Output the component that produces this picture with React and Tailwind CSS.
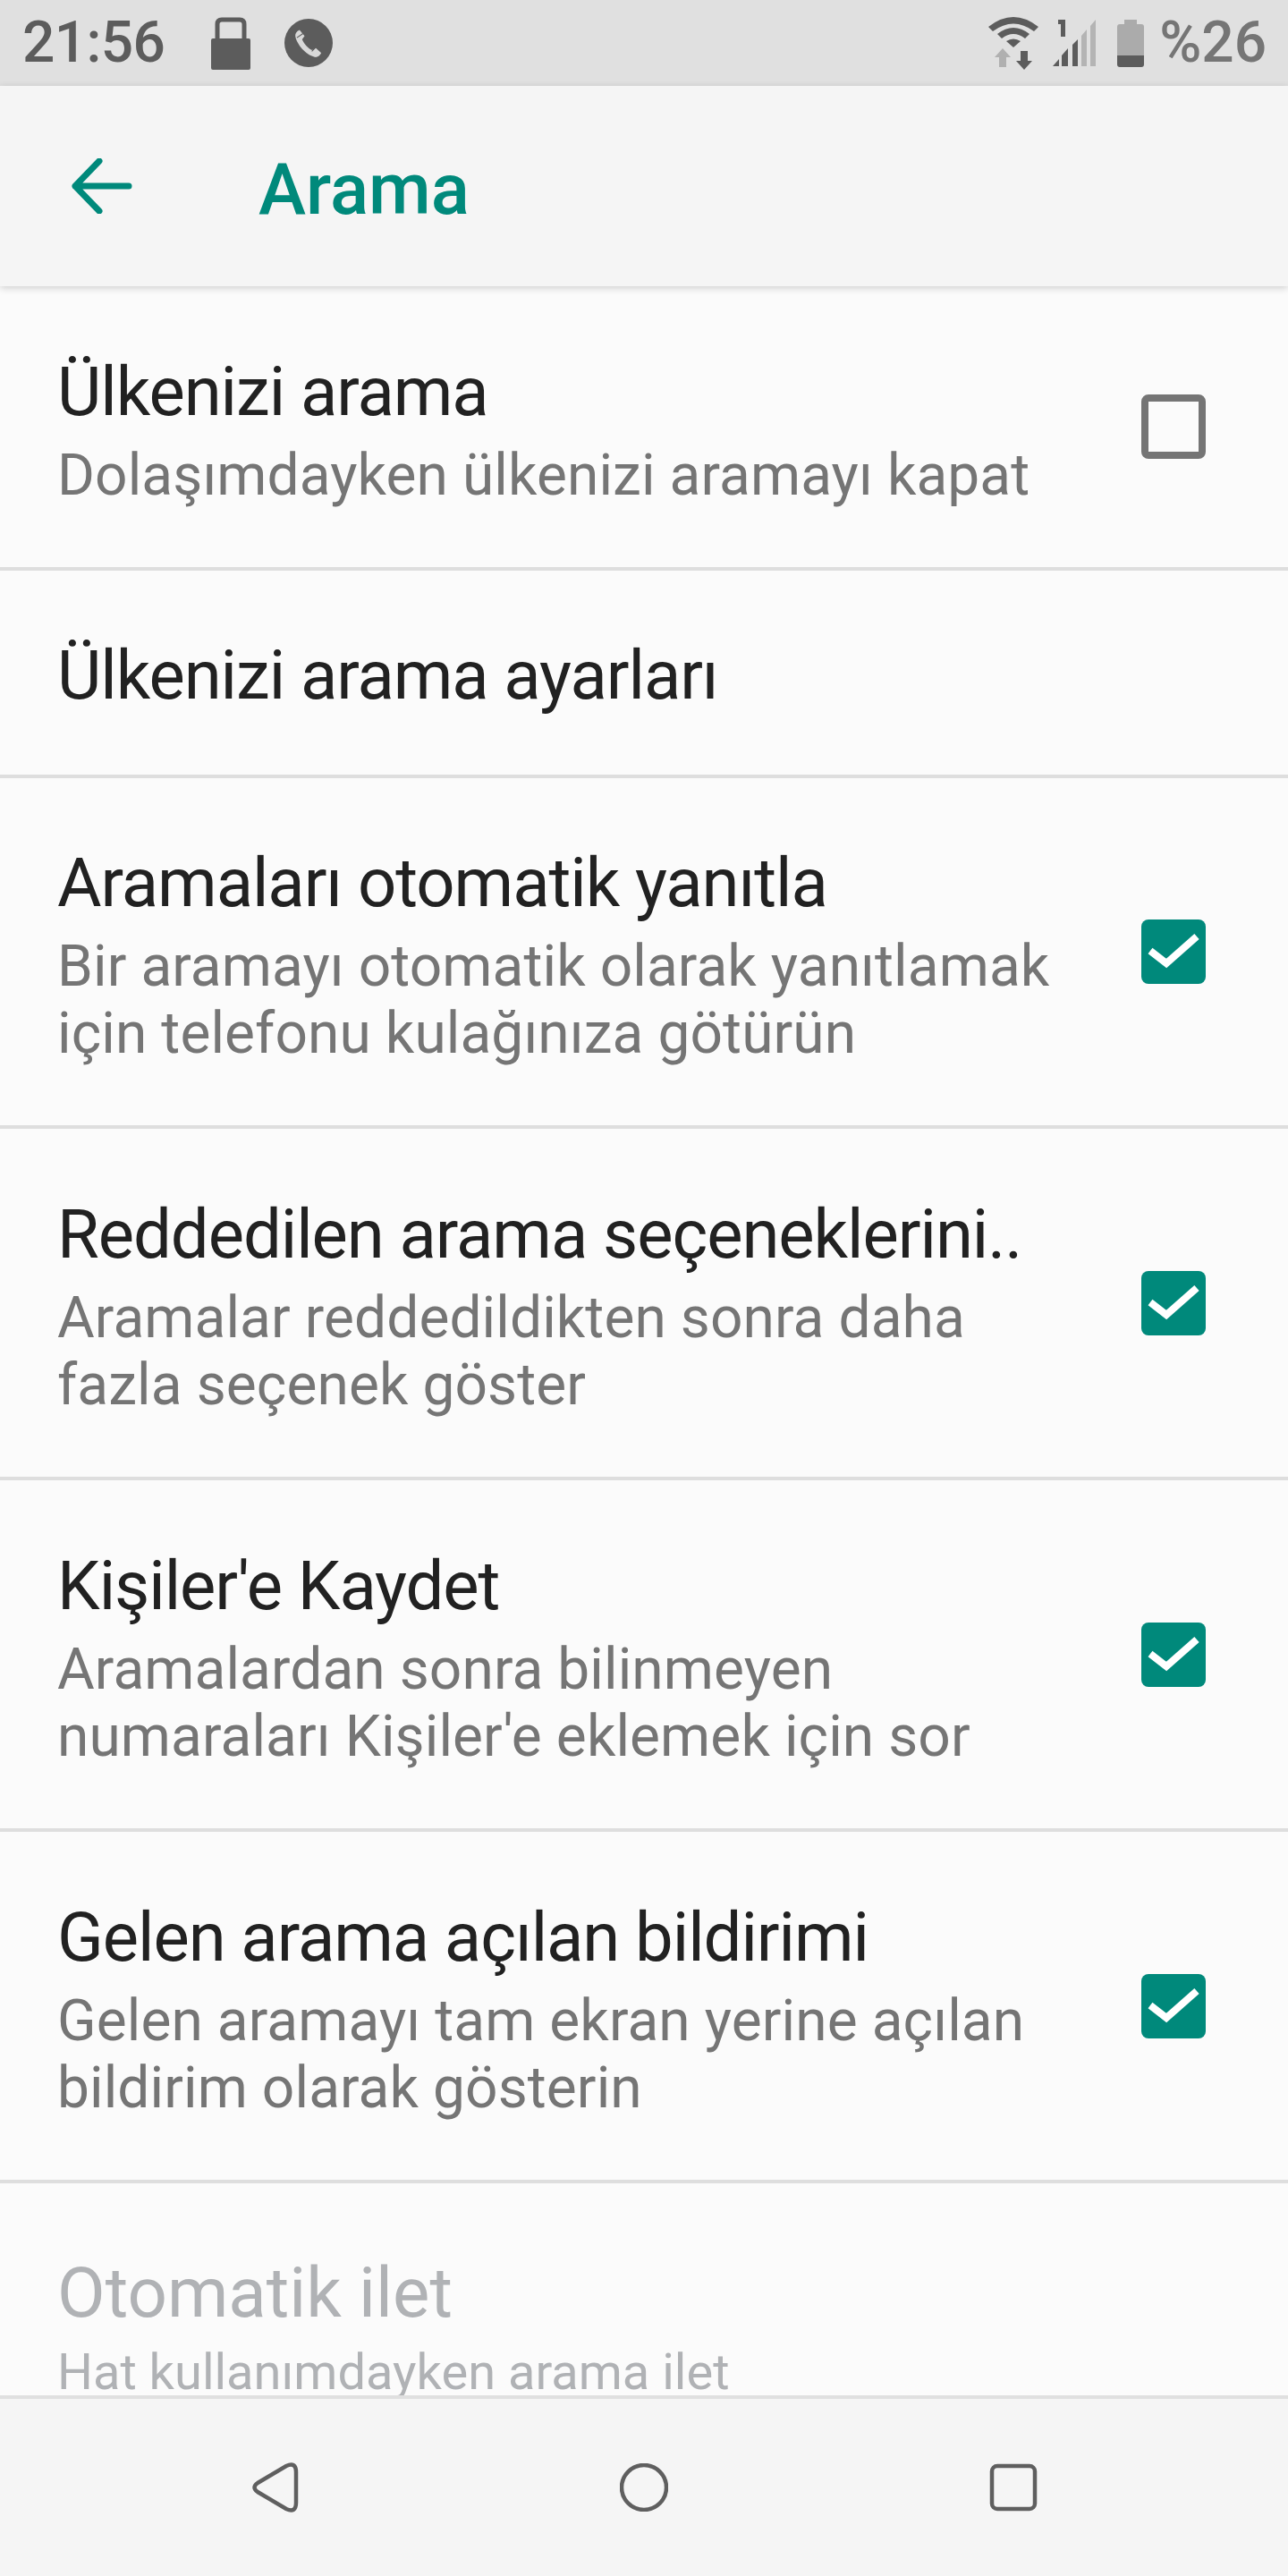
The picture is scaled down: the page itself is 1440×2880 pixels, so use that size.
const TEAL = "#00897b";

const rows = [
  { title: "Ülkenizi arama", lines: ["Dolaşımdayken ülkenizi aramayı kapat"], check: "off", h: "h-[318px]", pad: "pb-[4px]" },
  { title: "Ülkenizi arama ayarları", lines: [], h: "h-[232px]", pad: "pt-[6px]" },
  { title: "Aramaları otomatik yanıtla", lines: ["Bir aramayı otomatik olarak yanıtlamak", "için telefonu kulağınıza götürün"], check: "on", h: "h-[392px]", pad: "pb-[4px]" },
  { title: "Reddedilen arama seçeneklerini..", lines: ["Aramalar reddedildikten sonra daha", "fazla seçenek göster"], check: "on", h: "h-[393px]", pad: "pb-[4px]" },
  { title: "Kişiler'e Kaydet", lines: ["Aramalardan sonra bilinmeyen", "numaraları Kişiler'e eklemek için sor"], check: "on", h: "h-[393px]", pad: "pb-[4px]" },
  { title: "Gelen arama açılan bildirimi", lines: ["Gelen aramayı tam ekran yerine açılan", "bildirim olarak gösterin"], check: "on", h: "h-[393px]", pad: "pb-[4px]" },
];

const Checkbox = ({ checked }) =>
  checked ? (
    <svg width="72" height="72" viewBox="0 0 72 72" className="shrink-0">
      <rect width="72" height="72" rx="8" fill={TEAL} />
      <path d="M10 35 L28 49 L62 19" fill="none" stroke="#fff" strokeWidth="8" />
    </svg>
  ) : (
    <div className="w-[72px] h-[72px] shrink-0 rounded-lg border-[8px] border-[#757575]" />
  );

const Row = ({ row }) => (
  <div className={`${row.h} shrink-0 flex items-center pl-[64px] pr-[92px] border-b-4 border-[#dedede]`}>
    <div className={`${row.pad} flex-1 min-w-0`}>
      <div className="text-[76px] tracking-[-1.05px] leading-[112px] text-[#212121] whitespace-nowrap">{row.title}</div>
      {row.lines.map((line) => (
        <div key={line} className="text-[64px] tracking-[0.1px] leading-[75px] text-[#757575] whitespace-nowrap">{line}</div>
      ))}
    </div>
    {row.check && <Checkbox checked={row.check === "on"} />}
  </div>
);

const StatusRight = () => (
  <svg width="125" height="60" viewBox="1105 18 125 60" fill="none">
    <path d="M1105 30 Q1133 8 1161 30 L1156 35 Q1133 18 1110 35 Z" fill="#5c5c5c" />
    <path d="M1115 38 Q1133 24 1151 38 L1146 43 Q1133 33 1120 43 Z" fill="#5c5c5c" />
    <path d="M1125 46 Q1133 41 1141 46 L1133 53 Z" fill="#5c5c5c" />
    <path d="M1121 54 L1130 64 H1125 V75 H1117 V64 H1112 Z" fill="#b0b0b0" />
    <path d="M1141 57 H1149 V68 H1154 L1145 78 L1136 68 H1141 Z" fill="#5c5c5c" />
    <path d="M1183 22 H1191 V41 H1186 V27 H1183 Z" fill="#5c5c5c" />
    <path d="M1177 74 L1184 66 V74 Z" fill="#5c5c5c" />
    <path d="M1187 74 V62 L1194 54 V74 Z" fill="#5c5c5c" />
    <path d="M1199 74 V50 L1205 44 V74 Z" fill="#5c5c5c" />
    <path d="M1209 74 V40 L1215 33 V74 Z" fill="#b4b4b4" />
    <path d="M1219 74 V29 L1225 22 V74 Z" fill="#b4b4b4" />
  </svg>
);

const Battery = () => (
  <svg width="30" height="53" viewBox="0 0 30 53" className="ml-[19px]">
    <path d="M8 0 H22 V5 H27 Q30 5 30 8 V40 H0 V8 Q0 5 3 5 H8 Z" fill="#ababab" />
    <path d="M0 40 H30 V50 Q30 53 27 53 H3 Q0 53 0 50 Z" fill="#5c5c5c" />
  </svg>
);

export default function App() {
  return (
    <div className="w-[1440px] h-[2880px] flex flex-col bg-[#fbfbfb] overflow-hidden font-['Roboto',sans-serif]">
      <div className="h-[96px] shrink-0 bg-[#e0e0e0] flex items-center pl-[25px] pr-[24px]">
        <span className="w-[211px] text-[64px] tracking-[-0.6px] font-medium leading-none text-[#5c5c5c]">21:56</span>
        <svg width="44" height="59" viewBox="0 0 44 59">
          <path d="M7 26 V8 Q7 3 12 3 H32 Q37 3 37 8 V26" fill="none" stroke="#5c5c5c" strokeWidth="5" />
          <rect y="24" width="44" height="35" rx="2" fill="#5c5c5c" />
        </svg>
        <svg width="54" height="54" viewBox="0 0 24 24" className="ml-[38px]">
          <circle cx="12" cy="12" r="12" fill="#5c5c5c" />
          <path d="M7.5 5.5 L10 8.5 L8.8 10.2 C9.6 12.2 11.6 14.6 13.8 15.6 L15.5 14.4 L18.3 17 C17.4 18.6 16.2 19.3 15 19 C10.5 18 6 12.5 5.4 8.6 C5.3 7.3 6 6.2 7.5 5.5 Z" fill="#d8d8d8" />
          <path d="M6.2 9.4 L9.4 7.2 M13.6 16.2 L16.4 13.4" fill="none" stroke="#5c5c5c" strokeWidth="0.5" />
        </svg>
        <div className="ml-auto flex items-center">
          <StatusRight />
          <Battery />
          <span className="ml-[17px] text-[64px] font-medium leading-none text-[#757575]">%26</span>
        </div>
      </div>

      <div className="relative z-10 h-[224px] shrink-0 bg-[#f5f5f5] flex items-center pl-[80px] shadow-[0_2px_8px_rgba(0,0,0,0.18)]">
        <svg width="68" height="62" viewBox="0 0 68 62" fill="none" stroke={TEAL} strokeWidth="7" strokeLinecap="round" strokeLinejoin="round">
          <path d="M4 31 H64 M31 3 L4 31 L31 59" />
        </svg>
        <span className="ml-[141px] mt-[8px] text-[80px] font-medium leading-none" style={{ color: TEAL }}>Arama</span>
      </div>

      <div className="flex-1 min-h-0 overflow-hidden flex flex-col">
        {rows.map((row) => (
          <Row key={row.title} row={row} />
        ))}
        <div className="pl-[64px] pt-[72px] text-[#b0b2b5]">
          <div className="text-[78px] leading-[102px]">Otomatik ilet</div>
          <div className="text-[56px] leading-[75px] whitespace-nowrap">Hat kullanımdayken arama ilet</div>
        </div>
      </div>

      <div className="h-[202px] shrink-0 bg-[#f5f5f5] border-t-4 border-[#e0e0e0] flex items-center">
        <div className="w-[1440px] flex items-center justify-between pl-[280px] pr-[280px]">
          <svg width="54" height="58" viewBox="-2 0 54 58" fill="none" stroke="#5f5f5f" strokeWidth="4.5">
            <path d="M6 24 L38 5 Q49 0 49 12 V46 Q49 58 38 53 L6 34 Q-1 29 6 24 Z" />
          </svg>
          <svg width="54" height="54" viewBox="0 0 54 54" fill="none" stroke="#5f5f5f" strokeWidth="4.5">
            <circle cx="27" cy="27" r="25" />
          </svg>
          <svg width="54" height="54" viewBox="0 0 54 54" fill="none" stroke="#5f5f5f" strokeWidth="4.5">
            <rect x="3" y="3" width="48" height="48" rx="6" />
          </svg>
        </div>
      </div>
    </div>
  );
}
